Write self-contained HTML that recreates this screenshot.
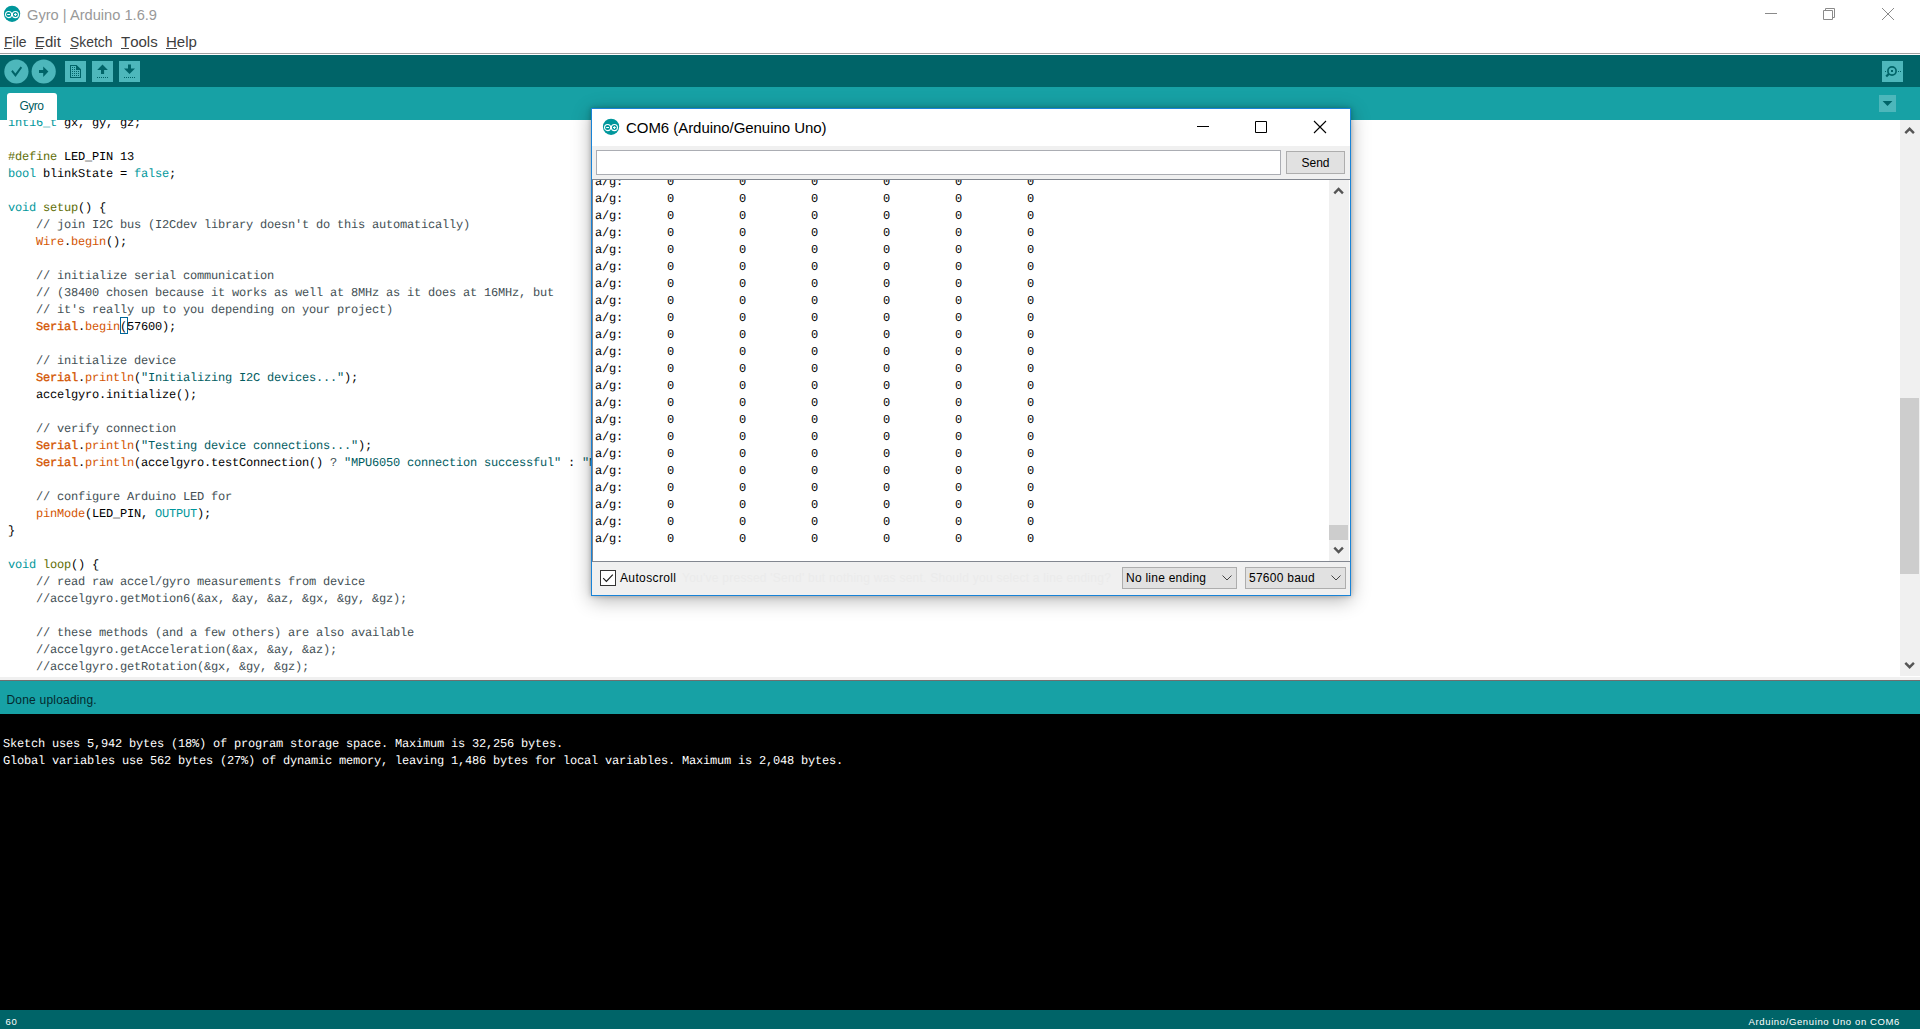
<!DOCTYPE html>
<html lang="en">
<head>
<meta charset="utf-8">
<title>Gyro | Arduino 1.6.9</title>
<style>
*{box-sizing:border-box;margin:0;padding:0}
html,body{width:1920px;height:1029px;overflow:hidden;background:#fff}
body{position:relative;font-family:"Liberation Sans",sans-serif;color:#000}
.abs{position:absolute}
/* ---------- main window title ---------- */
#title{left:27px;top:3px;height:24px;line-height:23px;font-size:15.5px;color:#999;white-space:nowrap;transform:scaleX(.945);transform-origin:0 0}
#menu{left:0;top:30px;height:23px;white-space:nowrap;font-size:15px;line-height:23px;color:#3d3d3d}
#menu span{position:absolute;top:0}
#menu u{text-decoration:none;position:relative}#menu u::after{content:"";position:absolute;left:0;right:2px;bottom:1px;height:1px;background:#444}#menu u.t1::after{right:1px}#menu u.h1::after{right:0}#menu u.f1::after{right:1px}
#menuline{left:0;top:53px;width:1920px;height:1px;background:#a0a0a0}
#toolbar{left:0;top:55px;width:1920px;height:32px;background:#006468}
#tabbar{left:0;top:87px;width:1920px;height:33px;background:#17a1a5}
#tab{left:7px;top:93px;width:50px;height:27px;background:#fff;border-radius:3px 3px 0 0;font-size:12px;line-height:26px;text-align:center;color:#005c5f;letter-spacing:-.45px;padding-right:1px}
/* ---------- editor ---------- */
#editor{left:0;top:120px;width:1900px;height:556px;background:#fff;overflow:hidden}
#code{position:absolute;left:8px;top:-5px;font-family:"Liberation Mono",monospace;font-size:12px;letter-spacing:-0.2012px;text-rendering:geometricPrecision;line-height:17px;white-space:pre;color:#000}
.c{color:#434f54}.t{color:#00979c}.o{color:#d35400}.k{color:#5e6d03}.s{color:#005c5f}
.ob{color:#d35400;-webkit-text-stroke:.35px #d35400}
/* scrollbars */
.sb{background:#f0f0f0}
.thumb{background:#cdcdcd}
/* ---------- status / console ---------- */
#split{left:0;top:677px;width:1920px;height:4px;background:#f0f0f0;border-bottom:1px solid #6f6f6f}
#status{left:0;top:681px;width:1920px;height:33px;background:#17a1a5;font-size:12px;line-height:39px;color:#04292e;padding-left:6.5px;letter-spacing:0.2px}
#console{left:0;top:714px;width:1920px;height:296px;background:#000;overflow:hidden}
#ctext{position:absolute;left:3px;top:22px;font-family:"Liberation Mono",monospace;font-size:12px;letter-spacing:-0.2012px;text-rendering:geometricPrecision;line-height:17px;white-space:pre;color:#fff}
#footer{left:0;top:1010px;width:1920px;height:19px;background:#006468;color:#fff;font-size:9.5px;line-height:23.5px}
/* ---------- dialog ---------- */
#dlg{left:591px;top:108px;width:760px;height:488px;background:#f0f0f0;border:1px solid #1883d7;box-shadow:0 4px 18px rgba(0,0,0,.3),0 0 5px rgba(0,0,0,.26)}
#dtitle{left:0;top:0;width:758px;height:37px;background:#fff}
#dtt{left:34px;top:7px;font-size:15px;line-height:24px;white-space:nowrap;color:#000;letter-spacing:-.05px}
#dinput{left:4px;top:41px;width:685px;height:25px;background:#fff;border:1px solid #abadb3}
#dsend{left:694px;top:42px;width:59px;height:23px;background:#e1e1e1;border:1px solid #adadad;font-size:12px;line-height:23px;text-align:center}
#dtext{left:0;top:70px;width:758px;height:383px;background:#fff;border:1px solid #828790;border-right:0;overflow:hidden}
#dlines{position:absolute;left:2px;top:-6px;font-family:"Liberation Mono",monospace;font-size:12px;letter-spacing:-0.2012px;text-rendering:geometricPrecision;line-height:17px;white-space:pre;color:#000}
#dlines i{font-style:normal;display:inline-block;width:72px}
.dd{background:#e1e1e1;border:1px solid #adadad;font-size:12px;line-height:21.5px;height:22px;padding-left:3px;white-space:nowrap;letter-spacing:.25px}
</style>
</head>
<body>
<!-- TITLE BAR -->
<svg class="abs" style="left:3px;top:5px" width="18" height="18" viewBox="0 0 18 18"><circle cx="9.05" cy="8.85" r="8.15" fill="#00979c"/><g fill="none" stroke="#fff" stroke-width="1.1"><circle cx="5.6" cy="9.55" r="3.05"/><circle cx="12.4" cy="9.55" r="3.05"/></g><path d="M4.2 9.55h2.8M11 9.55h2.8M12.4 8.15v2.8" stroke="#fff" stroke-width="1.05" fill="none"/></svg>
<div id="title" class="abs">Gyro | Arduino 1.6.9</div>
<div id="menu" class="abs"><span style="left:4px;transform:scaleX(.93);transform-origin:0 0"><u class="f1">F</u>ile</span><span style="left:35px"><u>E</u>dit</span><span style="left:70px;transform:scaleX(.925);transform-origin:0 0"><u>S</u>ketch</span><span style="left:121px"><u class="t1">T</u>ools</span><span style="left:166px"><u class="h1">H</u>elp</span></div>
<svg class="abs" style="left:1750px;top:0" width="170" height="30" viewBox="1750 0 170 30" fill="none" stroke="#8a8a8a" stroke-width="1">
<path d="M1765 13.5 H1777"/>
<path d="M1823.5 10.5 H1832.5 V19.5 H1823.5 Z M1825.5 10.5 V8.5 H1834.5 V17.5 H1832.5"/>
<path d="M1882 8 L1894 20 M1894 8 L1882 20"/>
</svg>
<div id="menuline" class="abs"></div>
<div id="toolbar" class="abs"></div>
<svg class="abs" style="left:0;top:55px" width="1920" height="65" viewBox="0 55 1920 65">
<g fill="#4db7bb">
<circle cx="16.4" cy="71.5" r="12.1"/><circle cx="43.7" cy="71.5" r="12.1"/>
<rect x="65" y="61" width="21" height="21"/><rect x="92" y="61" width="21" height="21"/><rect x="119" y="61" width="21" height="21"/>
<rect x="1882" y="61" width="21" height="21"/>
</g>
<g fill="#006468">
<path d="M11.2 71.4 L12.6 70.1 L15.4 73.6 L20.6 66.6 L22.1 67.7 L15.5 76.9 Z"/>
<path d="M39 70.1 H43.2 V66.6 L48.4 71.6 L43.2 76.9 V73 H39 Z"/>
<!-- new doc -->
<path d="M70 65 H76.6 L81 69.2 V78 H70 Z M71 66 V77 H80 V70 H76 V66 Z" fill-rule="evenodd"/>
<path d="M72 67h1v1h-1zM74 67h1v1h-1zM72 69h1v1h-1zM74 69h1v1h-1zM72 71h1v1h-1zM74 71h1v1h-1zM76 71h1v1h-1zM78 71h1v1h-1zM72 73h1v1h-1zM74 73h1v1h-1zM76 73h1v1h-1zM78 73h1v1h-1zM72 75h1v1h-1zM74 75h1v1h-1zM76 75h1v1h-1zM78 75h1v1h-1z"/>
<!-- open (up arrow) -->
<path d="M102.5 64.6 L107.9 69.9 H104.1 V73.9 H101 V69.9 H97.2 Z"/>
<path d="M97 77h1v1h-1zM99 77h1v1h-1zM101 77h1v1h-1zM103 77h1v1h-1zM105 77h1v1h-1zM107 77h1v1h-1z"/>
<!-- save (down arrow) -->
<path d="M128 64.4 H131 V68.5 H135 L129.5 74.1 L124 68.5 H128 Z"/>
<path d="M124 77h1v1h-1zM126 77h1v1h-1zM128 77h1v1h-1zM130 77h1v1h-1zM132 77h1v1h-1zM134 77h1v1h-1z"/>
<!-- serial monitor -->
<path d="M1885 71h1v1h-1zM1898 71h1v1h-1zM1900 71h1v1h-1zM1891 70h2v2h-2z"/>
</g>
<circle cx="1892" cy="71" r="4.1" fill="none" stroke="#006468" stroke-width="1.7"/>
<path d="M1888.8 74 L1886.2 76.5" stroke="#006468" stroke-width="2.4" fill="none"/>
</svg>
<div id="tabbar" class="abs"></div>
<div id="tab" class="abs">Gyro</div>
<div class="abs" style="left:1879px;top:95px;width:17px;height:17px;background:#4db7bb"></div>
<svg class="abs" style="left:1879px;top:95px" width="17" height="17" viewBox="0 0 17 17"><path d="M3.6 6 H13.4 L8.5 11 Z" fill="#006468"/></svg>
<!-- EDITOR -->
<div id="editor" class="abs"><div class="abs" style="left:120px;top:197px;width:8px;height:17px;border:1px solid #006699"></div><div id="code"><span class="t">int16_t</span> gx, gy, gz;

<span class="k">#define</span> LED_PIN 13
<span class="t">bool</span> blinkState = <span class="t">false</span>;

<span class="t">void</span> <span class="k">setup</span>() {
    <span class="c">// join I2C bus (I2Cdev library doesn't do this automatically)</span>
    <span class="o">Wire</span>.<span class="o">begin</span>();

    <span class="c">// initialize serial communication</span>
    <span class="c">// (38400 chosen because it works as well at 8MHz as it does at 16MHz, but</span>
    <span class="c">// it's really up to you depending on your project)</span>
    <span class="ob">Serial</span>.<span class="o">begin</span>(57600);

    <span class="c">// initialize device</span>
    <span class="ob">Serial</span>.<span class="o">println</span>(<span class="s">"Initializing I2C devices..."</span>);
    accelgyro.initialize();

    <span class="c">// verify connection</span>
    <span class="ob">Serial</span>.<span class="o">println</span>(<span class="s">"Testing device connections..."</span>);
    <span class="ob">Serial</span>.<span class="o">println</span>(accelgyro.testConnection() <span class="c">?</span> <span class="s">"MPU6050 connection successful"</span> : <span class="s">"MPU6050 connection failed"</span>);

    <span class="c">// configure Arduino LED for</span>
    <span class="o">pinMode</span>(LED_PIN, <span class="t">OUTPUT</span>);
}

<span class="t">void</span> <span class="k">loop</span>() {
    <span class="c">// read raw accel/gyro measurements from device</span>
    <span class="c">//accelgyro.getMotion6(&amp;ax, &amp;ay, &amp;az, &amp;gx, &amp;gy, &amp;gz);</span>

    <span class="c">// these methods (and a few others) are also available</span>
    <span class="c">//accelgyro.getAcceleration(&amp;ax, &amp;ay, &amp;az);</span>
    <span class="c">//accelgyro.getRotation(&amp;gx, &amp;gy, &amp;gz);</span></div></div>
<div id="split" class="abs"></div>
<div class="abs sb" style="left:1900px;top:120px;width:20px;height:556px"></div>
<div class="abs thumb" style="left:1900px;top:398px;width:19px;height:176px"></div>
<svg class="abs" style="left:1900px;top:120px" width="20" height="556" viewBox="0 0 20 556" fill="none" stroke="#555" stroke-width="2.4"><path d="M5.3 13.2 L9.6 8.8 L13.9 13.2"/><path d="M5.3 542.8 L9.6 547.2 L13.9 542.8"/></svg>
<div id="status" class="abs">Done uploading.</div>
<div id="console" class="abs"><div id="ctext">Sketch uses 5,942 bytes (18%) of program storage space. Maximum is 32,256 bytes.
Global variables use 562 bytes (27%) of dynamic memory, leaving 1,486 bytes for local variables. Maximum is 2,048 bytes.</div></div>
<div id="footer" class="abs"><span class="abs" style="left:5.5px;letter-spacing:.8px">60</span><span class="abs" style="right:20px;letter-spacing:.62px;white-space:nowrap">Arduino/Genuino Uno on COM6</span></div>
<!-- DIALOG -->
<div id="dlg" class="abs">
<div id="dtitle" class="abs"></div>
<svg class="abs" style="left:10px;top:9px" width="18" height="18" viewBox="0 0 18 18"><circle cx="9.05" cy="8.85" r="8.15" fill="#00979c"/><g fill="none" stroke="#fff" stroke-width="1.1"><circle cx="5.6" cy="9.55" r="3.05"/><circle cx="12.4" cy="9.55" r="3.05"/></g><path d="M4.2 9.55h2.8M11 9.55h2.8M12.4 8.15v2.8" stroke="#fff" stroke-width="1.05" fill="none"/></svg>
<svg class="abs" style="left:588px;top:0" width="170" height="37" viewBox="1180 109 170 37" fill="none" stroke="#000" stroke-width="1">
<path d="M1197 126.5 H1209"/>
<path d="M1255.5 121.5 H1266.5 V132.5 H1255.5 Z"/>
<path d="M1314 121 L1326 133 M1326 121 L1314 133" stroke-width="1.1"/>
</svg>
<div id="dtt" class="abs">COM6 (Arduino/Genuino Uno)</div>
<div id="dinput" class="abs"></div>
<div id="dsend" class="abs">Send</div>
<div class="abs" style="left:8px;top:461px;width:16px;height:16px;background:#fff;border:1px solid #333"></div>
<svg class="abs" style="left:8px;top:461px" width="16" height="16" viewBox="0 0 16 16" fill="none" stroke="#1a1a1a" stroke-width="1.2"><path d="M3.2 8.2 L6.4 11.4 L12.8 4.6"/></svg>
<div class="abs" style="left:28px;top:458px;font-size:12px;line-height:23px;letter-spacing:.37px">Autoscroll</div>
<div id="ghost" class="abs" style="left:90px;top:458px;font-size:12px;line-height:23px;color:#ebebeb;white-space:nowrap;letter-spacing:.25px">You've pressed 'Send' but nothing was sent. Should you select a line ending?</div>
<div class="abs dd" style="left:530px;top:458px;width:115px">No line ending</div>
<div class="abs dd" style="left:653px;top:458px;width:101px">57600 baud</div>
<svg class="abs" style="left:530px;top:458px" width="224" height="22" viewBox="0 0 224 22" fill="none" stroke="#444" stroke-width="1"><path d="M100.5 8.5 L105 13 L109.5 8.5"/><path d="M209.5 8.5 L214 13 L218.5 8.5"/></svg>
<div id="dtext" class="abs"><div id="dlines"><i>a/g:</i><i>0</i><i>0</i><i>0</i><i>0</i><i>0</i><i>0</i>
<i>a/g:</i><i>0</i><i>0</i><i>0</i><i>0</i><i>0</i><i>0</i>
<i>a/g:</i><i>0</i><i>0</i><i>0</i><i>0</i><i>0</i><i>0</i>
<i>a/g:</i><i>0</i><i>0</i><i>0</i><i>0</i><i>0</i><i>0</i>
<i>a/g:</i><i>0</i><i>0</i><i>0</i><i>0</i><i>0</i><i>0</i>
<i>a/g:</i><i>0</i><i>0</i><i>0</i><i>0</i><i>0</i><i>0</i>
<i>a/g:</i><i>0</i><i>0</i><i>0</i><i>0</i><i>0</i><i>0</i>
<i>a/g:</i><i>0</i><i>0</i><i>0</i><i>0</i><i>0</i><i>0</i>
<i>a/g:</i><i>0</i><i>0</i><i>0</i><i>0</i><i>0</i><i>0</i>
<i>a/g:</i><i>0</i><i>0</i><i>0</i><i>0</i><i>0</i><i>0</i>
<i>a/g:</i><i>0</i><i>0</i><i>0</i><i>0</i><i>0</i><i>0</i>
<i>a/g:</i><i>0</i><i>0</i><i>0</i><i>0</i><i>0</i><i>0</i>
<i>a/g:</i><i>0</i><i>0</i><i>0</i><i>0</i><i>0</i><i>0</i>
<i>a/g:</i><i>0</i><i>0</i><i>0</i><i>0</i><i>0</i><i>0</i>
<i>a/g:</i><i>0</i><i>0</i><i>0</i><i>0</i><i>0</i><i>0</i>
<i>a/g:</i><i>0</i><i>0</i><i>0</i><i>0</i><i>0</i><i>0</i>
<i>a/g:</i><i>0</i><i>0</i><i>0</i><i>0</i><i>0</i><i>0</i>
<i>a/g:</i><i>0</i><i>0</i><i>0</i><i>0</i><i>0</i><i>0</i>
<i>a/g:</i><i>0</i><i>0</i><i>0</i><i>0</i><i>0</i><i>0</i>
<i>a/g:</i><i>0</i><i>0</i><i>0</i><i>0</i><i>0</i><i>0</i>
<i>a/g:</i><i>0</i><i>0</i><i>0</i><i>0</i><i>0</i><i>0</i>
<i>a/g:</i><i>0</i><i>0</i><i>0</i><i>0</i><i>0</i><i>0</i></div></div>
<div class="abs sb" style="left:737px;top:71px;width:20px;height:381px"></div>
<div class="abs thumb" style="left:737px;top:416px;width:19px;height:15px"></div>
<svg class="abs" style="left:737px;top:71px" width="20" height="381" viewBox="0 0 20 381" fill="none" stroke="#555" stroke-width="2.4"><path d="M5.3 13.4 L9.6 9 L13.9 13.4"/><path d="M5.3 367.6 L9.6 372 L13.9 367.6"/></svg>
</div>
</body>
</html>
